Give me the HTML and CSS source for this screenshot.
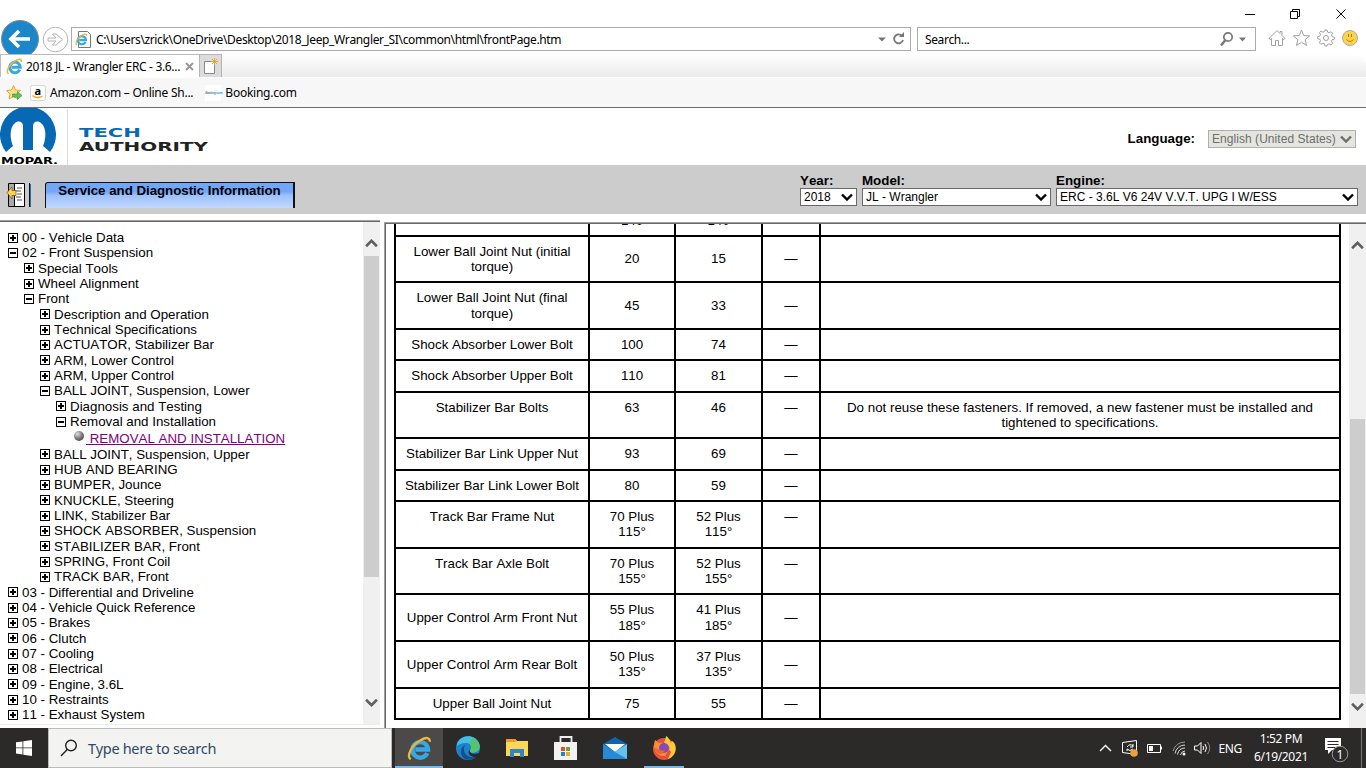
FILE: index.html
```
<!DOCTYPE html>
<html lang="en">
<head>
    <meta charset="UTF-8">
    <title>2018 JL - Wrangler ERC - 3.6L</title>
    <link rel="stylesheet" href="styles.css">
</head>
<body>
    <svg class="defs" width="0" height="0">
        <symbol id="ie" viewBox="0 0 24 24">
            <path d="M19.500 16.500A7.500 7.500 0 1 1 20.200 13H8" fill="none" stroke="#35a9e6" stroke-width="4.200"/>
            <path d="M3.500 22.500C-1 19 5 8 13 4c5-3 9-3 9 1.500" fill="none" stroke="#f2b632" stroke-width="2.200"/>
        </symbol>
        <symbol id="chev" viewBox="0 0 12 8">
            <path d="M1 1.500l5 5 5-5" fill="none" stroke="currentColor" stroke-width="2.400"/>
        </symbol>
    </svg>

    <div class="window-controls">
        <svg width="121" height="27" viewBox="0 0 121 27" fill="none" stroke="#000">
            <path d="M0 14.500h10M45.500 11.500h7v7h-7zM47.500 11v-1.500h7v7H53M91.500 9.500l9 9M100.500 9.500l-9 9"/>
        </svg>
    </div>

    <div class="nav-row">
        <svg class="back" width="40" height="34" viewBox="0 0 40 34">
            <circle cx="20" cy="19" r="18.500" fill="#1b87c9" stroke="#7c8b95"/>
            <path d="M30 19H12M19 11l-8 8 8 8" fill="none" stroke="#fff" stroke-width="3.600"/>
        </svg>
        <svg class="forward" width="27" height="27" viewBox="0 0 27 27" fill="none" stroke="#b3b3b3">
            <circle cx="13.500" cy="12.500" r="12.300"/>
            <path d="M6 11h8l-3.500-4h3.500l6.500 5.500-6.500 5.500h-3.500l3.500-4H6z"/>
        </svg>
        <div class="address">
            <svg width="17" height="17" viewBox="0 0 17 17">
                <path d="M3.500 .5h9l3 3v13h-12z" fill="#fff" stroke="#777"/>
                <use href="#ie" x="0" y="2" width="13" height="13"/>
            </svg>
            <span class="url">C:\Users\zrick\OneDrive\Desktop\2018_Jeep_Wrangler_SI\common\html\frontPage.htm</span>
            <svg class="address-tools" width="30" height="16" viewBox="0 0 30 16">
                <path d="M2 6.500h8L6 10.500z" fill="#777"/>
                <path d="M26 4.800A4.500 4.500 0 1 0 27 9" fill="none" stroke="#777" stroke-width="1.800"/>
                <path d="M23 6h5V1z" fill="#777"/>
            </svg>
        </div>
        <div class="search">
            <span class="search-text">Search...</span>
            <svg width="30" height="16" viewBox="0 0 30 16">
                <path d="M2 14.500l4-5" stroke="#777" stroke-width="2.400"/>
                <circle cx="9" cy="6" r="4.200" fill="none" stroke="#777" stroke-width="1.700"/>
                <path d="M20 6.500h7L23.500 10.500z" fill="#777"/>
            </svg>
        </div>
        <svg class="tools" width="92" height="20" viewBox="0 0 92 20" fill="none" stroke="#a0a0a0">
            <path d="M1 10.500l8-8 3 3v-2h2v4l3 3-1.500 1-1-1v7h-4v-5h-3v5h-4v-7l-1 1z"/>
            <path d="M33.500 2l2.200 5.500 6 .4-4.600 3.800 1.500 5.800-5.100-3.200-5.100 3.200 1.500-5.800-4.600-3.800 6-.4z"/>
            <path d="M57 2h2l.6 2.200 1.500.6 2-1.100 1.500 1.500-1.100 2 .6 1.500 2.200.6v2l-2.200.6-.6 1.500 1.100 2-1.500 1.500-2-1.100-1.500.6L59 18h-2l-.6-2.200-1.500-.6-2 1.100-1.500-1.500 1.100-2-.6-1.500-2.200-.6v-2l2.200-.6.600-1.500-1.100-2 1.500-1.500 2 1.100 1.500-.6z"/>
            <circle cx="58" cy="10" r="2.500"/>
            <circle cx="82" cy="10" r="7.500" fill="#fcd34b" stroke="#aaa"/>
            <path d="M80.500 6v3M83.500 6v3M78.500 11.500q3.500 4 7 0" stroke="#b07a1c"/>
        </svg>
    </div>

    <div class="tab-row">
        <div class="tab">
            <svg width="17" height="17"><use href="#ie"/></svg>
            <span class="tab-title">2018 JL - Wrangler ERC - 3.6...</span>
            <svg width="9" height="9" viewBox="0 0 9 9"><path d="M1 1l7 7M8 1L1 8" stroke="#999" stroke-width="2"/></svg>
        </div>
        <div class="new-tab">
            <svg width="16" height="18" viewBox="0 0 16 18">
                <path d="M1.500 4.500h10v12h-10z" fill="#fff" stroke="#888"/>
                <path d="M11.500 1v7M8 4.500h7M9 2l5 5M14 2L9 7" stroke="#eda63a"/>
            </svg>
        </div>
        <div class="tab-space"></div>
    </div>

    <div class="favorites">
        <svg width="17" height="17" viewBox="0 0 17 17">
            <path d="M7.500 1.500l2 4.500 5 .5-4 3.500 1.500 5-4.500-2.500L3 15l1-5-3.500-3.500 5-.5z" fill="#fde08a" stroke="#e8a33d"/>
            <path d="M6.500 10h5V7.500l4.500 4-4.500 4V13h-5z" fill="#5fc35a" stroke="#3a9d48" stroke-width=".7"/>
        </svg>
        <svg class="amazon" width="16" height="16" viewBox="0 0 16 16">
            <rect x=".5" y=".5" width="15" height="15" rx="2" fill="#fff" stroke="#d5d5d5"/>
            <text x="4.500" y="9.500" class="amazon-a">a</text>
            <path d="M2.500 10.500q5 4 10 .5" fill="none" stroke="#f5a623" stroke-width="1.500"/>
        </svg>
        <span class="fav-name">Amazon.com – Online Sh...</span>
        <span class="booking"><i>Booking</i><b>.com</b></span>
        <span class="fav-name">Booking.com</span>
    </div>

    <div class="brand">
        <svg width="220" height="57" viewBox="0 0 220 57">
            <path d="M6 44A28 28 0 1 1 50 44L43 38C46 31 47 20 41 15c-4-3-8-1-8 3v24H23V18c0-4-4-6-8-3-6 5-5 16-2 23z" fill="#0769b3"/>
            <text x="1" y="56" textLength="57" lengthAdjust="spacingAndGlyphs" class="mopar">MOPAR.</text>
            <path d="M67.500 1v56" stroke="#ddd"/>
            <text x="79" y="28.500" textLength="62" lengthAdjust="spacingAndGlyphs" class="wide blue">TECH</text>
            <text x="79" y="42.500" textLength="129" lengthAdjust="spacingAndGlyphs" class="wide">AUTHORITY</text>
        </svg>
        <div class="language">
            <b>Language:</b>
            <div class="select disabled"><span>English (United States)</span><svg width="12" height="8"><use href="#chev"/></svg></div>
        </div>
    </div>

    <div class="toolbar">
        <svg class="toc" width="25" height="26" viewBox="0 0 25 26">
            <path d="M2.500 1.500h16v23h-16z" fill="#fff" stroke="#000"/>
            <path d="M3 2h5v22H3z" fill="#aaa"/>
            <path d="M8.500 2v22" stroke="#000"/>
            <path d="M11 6h5M10 9h5M11 12h5M10 15h5M11 18h5" stroke="#555"/>
            <path d="M1 10.500L6 5v3.500h4v5H6V17z" fill="#ffd34d" stroke="#6b5310" stroke-width=".7"/>
            <path d="M23.500 1v24" stroke="#111"/><path d="M24.500 2v23" stroke="#2272b5"/>
        </svg>
        <div class="service-tab">Service and Diagnostic Information</div>
        <div class="vehicle">
            <label class="year">Year:<span class="select"><span>2018</span><svg width="12" height="8"><use href="#chev"/></svg></span></label>
            <label class="model">Model:<span class="select"><span>JL - Wrangler</span><svg width="12" height="8"><use href="#chev"/></svg></span></label>
            <label class="engine">Engine:<span class="select"><span>ERC - 3.6L V6 24V V.V.T. UPG I W/ESS</span><svg width="12" height="8"><use href="#chev"/></svg></span></label>
        </div>
    </div>

    <div class="frames">
        <div class="left-frame">
            <ul class="tree">
                <li class="plus">00 - Vehicle Data</li>
                <li class="minus">02 - Front Suspension</li>
                <li class="plus l1">Special Tools</li>
                <li class="plus l1">Wheel Alignment</li>
                <li class="minus l1">Front</li>
                <li class="plus l2">Description and Operation</li>
                <li class="plus l2">Technical Specifications</li>
                <li class="plus l2">ACTUATOR, Stabilizer Bar</li>
                <li class="plus l2">ARM, Lower Control</li>
                <li class="plus l2">ARM, Upper Control</li>
                <li class="minus l2">BALL JOINT, Suspension, Lower</li>
                <li class="plus l3">Diagnosis and Testing</li>
                <li class="minus l3">Removal and Installation</li>
                <li class="leaf"><a href="#">&nbsp;REMOVAL AND INSTALLATION</a></li>
                <li class="plus l2">BALL JOINT, Suspension, Upper</li>
                <li class="plus l2">HUB AND BEARING</li>
                <li class="plus l2">BUMPER, Jounce</li>
                <li class="plus l2">KNUCKLE, Steering</li>
                <li class="plus l2">LINK, Stabilizer Bar</li>
                <li class="plus l2">SHOCK ABSORBER, Suspension</li>
                <li class="plus l2">STABILIZER BAR, Front</li>
                <li class="plus l2">SPRING, Front Coil</li>
                <li class="plus l2">TRACK BAR, Front</li>
                <li class="plus">03 - Differential and Driveline</li>
                <li class="plus">04 - Vehicle Quick Reference</li>
                <li class="plus">05 - Brakes</li>
                <li class="plus">06 - Clutch</li>
                <li class="plus">07 - Cooling</li>
                <li class="plus">08 - Electrical</li>
                <li class="plus">09 - Engine, 3.6L</li>
                <li class="plus">10 - Restraints</li>
                <li class="plus">11 - Exhaust System</li>
            </ul>
            <div class="scrollbar left-bar">
                <svg class="up" width="13" height="9"><use href="#chev"/></svg>
                <div class="thumb"></div>
                <svg width="13" height="9"><use href="#chev"/></svg>
            </div>
        </div>
        <div class="right-frame">
            <div class="content">
                <table>
                    <colgroup><col class="c1"><col class="c2"><col class="c3"><col class="c4"><col class="c5"></colgroup>
                    <tr class="first"><td></td><td>140</td><td>140</td><td></td><td></td></tr>
                    <tr class="two"><td>Lower Ball Joint Nut (initial torque)</td><td>20</td><td>15</td><td>—</td><td></td></tr>
                    <tr class="two"><td>Lower Ball Joint Nut (final torque)</td><td>45</td><td>33</td><td>—</td><td></td></tr>
                    <tr><td>Shock Absorber Lower Bolt</td><td>100</td><td>74</td><td>—</td><td></td></tr>
                    <tr><td>Shock Absorber Upper Bolt</td><td>110</td><td>81</td><td>—</td><td></td></tr>
                    <tr class="two top"><td>Stabilizer Bar Bolts</td><td>63</td><td>46</td><td>—</td><td>Do not reuse these fasteners. If removed, a new fastener must be installed and tightened to specifications.</td></tr>
                    <tr><td>Stabilizer Bar Link Upper Nut</td><td>93</td><td>69</td><td>—</td><td></td></tr>
                    <tr><td>Stabilizer Bar Link Lower Bolt</td><td>80</td><td>59</td><td>—</td><td></td></tr>
                    <tr class="two top"><td>Track Bar Frame Nut</td><td>70 Plus 115°</td><td>52 Plus 115°</td><td>—</td><td></td></tr>
                    <tr class="two top"><td>Track Bar Axle Bolt</td><td>70 Plus 155°</td><td>52 Plus 155°</td><td>—</td><td></td></tr>
                    <tr class="two"><td>Upper Control Arm Front Nut</td><td>55 Plus 185°</td><td>41 Plus 185°</td><td>—</td><td></td></tr>
                    <tr class="two"><td>Upper Control Arm Rear Bolt</td><td>50 Plus 135°</td><td>37 Plus 135°</td><td>—</td><td></td></tr>
                    <tr><td>Upper Ball Joint Nut</td><td>75</td><td>55</td><td>—</td><td></td></tr>
                </table>
            </div>
            <div class="scrollbar right-bar">
                <svg class="up" width="13" height="9"><use href="#chev"/></svg>
                <div class="thumb"></div>
                <svg width="13" height="9"><use href="#chev"/></svg>
            </div>
        </div>
    </div>

    <div class="taskbar">
        <div class="start">
            <svg width="16" height="16" viewBox="0 0 16 16" fill="#fff"><path d="M0 2.300l6.500-.9v6.100H0zM7.300 1.300L16 0v7.500H7.300zM0 8.300h6.500v6.200L0 13.600zM7.300 8.300H16V16l-8.700-1.300z"/></svg>
        </div>
        <div class="task-search">
            <svg width="18" height="18" viewBox="0 0 18 18" fill="none" stroke="#222" stroke-width="1.400"><circle cx="11" cy="6.500" r="5.300"/><path d="M7.200 10.500L1 17"/></svg>
            <span>Type here to search</span>
        </div>
        <div class="apps">
            <div class="app active"><svg width="25" height="25"><use href="#ie"/></svg></div>
            <div class="app">
                <svg width="24" height="24" viewBox="0 0 24 24">
                    <circle cx="12" cy="12" r="12" fill="#1c82cc"/>
                    <path d="M1 8C4-1 18-3 23 7c3 7-3 11-9 9 3-3 2-9-4-9-4 0-7 1-9 3z" fill="#45bde4"/>
                    <path d="M17 1.500c8 4 9 14 0 15-3 0-4-1-3-2 2-3 1-6-1-7z" fill="#54c56a"/>
                    <path d="M9 9c-4 8 4 15 12 11-4 5-12 5-15 0-3-5 0-9 3-11z" fill="#124f8c"/>
                    <path d="M14 13c-2 4 4 6 9 4l1 3-3 1c-6 1-11-4-7-8z" fill="#2b2a29"/>
                </svg>
            </div>
            <div class="app">
                <svg width="22" height="20" viewBox="0 0 22 20">
                    <path d="M0 1h9l2 2h11v15H0z" fill="#fcd658"/><path d="M0 1h9l2 2-2 1H0z" fill="#e79f27"/>
                    <path d="M4 19v-8h14v8h-4v-4H8v4z" fill="#2b86cf"/>
                </svg>
            </div>
            <div class="app">
                <svg width="24" height="24" viewBox="0 0 24 24">
                    <path d="M6.500 7V1h11v6" fill="none" stroke="#eee" stroke-width="1.800"/><path d="M0 6h23v18H0z" fill="#f2f2f2"/>
                    <path d="M7 11h4v4H7z" fill="#e0502c"/><path d="M12 11h4v4h-4z" fill="#6aa52c"/><path d="M7 16h4v4H7z" fill="#2485cf"/><path d="M12 16h4v4h-4z" fill="#efa92b"/>
                </svg>
            </div>
            <div class="app">
                <svg width="24" height="24" viewBox="0 0 24 24">
                    <path d="M0 8l12-7 12 7v15H0z" fill="#0d65ae"/><path d="M2 8h20l-10 8z" fill="#fff"/>
                    <path d="M24 8v15H0z" fill="#62c1ef"/><path d="M0 8l12 8 12 7H0z" fill="#268ad6"/>
                </svg>
            </div>
            <div class="app running">
                <svg width="24" height="24" viewBox="0 0 24 24">
                    <circle cx="12" cy="13" r="11" fill="#e8503c"/>
                    <path d="M14 0c0 4-3 5-1 8l6 8-3 7c9-3 10-15 4-18-1 1-1 2-1 2-1-3-3-6-5-7z" fill="#fbc83b"/>
                    <path d="M3 4l4 3c4-1 9 1 11 5l-5 8C4 20 0 14 3 4z" fill="#f4912f"/>
                    <circle cx="12" cy="12" r="5" fill="#8549b8"/><path d="M2 12c4 0 7 4 11 2-1 5-9 6-11-2z" fill="#ef6534"/>
                </svg>
            </div>
        </div>
        <div class="tray">
            <svg width="112" height="24" viewBox="0 0 112 24" fill="none" stroke="#fff">
                <path d="M1 15l5.500-5.500L12 15" stroke-width="1.400"/>
                <path d="M23.500 6.500l14-2v14l-14-2zM28 11q3-4 6-1M34 8v3h-3M34 13q-3 3-6 0M28 15v-2"/>
                <circle cx="35" cy="17" r="3.800" fill="#e9a23b" stroke="none"/>
                <path d="M48.500 8.500h13v8h-13zM62.500 10.500v3"/><path d="M50 10h4v5h-4z" fill="#fff" stroke="none"/>
                <path d="M76 17.500A10 10 0 0 1 86 9M78.500 18.500a8 8 0 0 1 7.500-6.500M81.500 19a5 5 0 0 1 4.500-4" stroke="#ddd"/>
                <path d="M74 15A12 12 0 0 1 86 6" stroke="#999"/><circle cx="85" cy="18" r="1.500" fill="#fff" stroke="none"/>
                <path d="M95.500 10h3l3.500-3.500v11L98.500 14h-3zM104 10q1.500 2 0 4M106 8q3 4 0 8"/>
                <path d="M108.500 6q4.500 6 0 12" stroke="#888"/>
            </svg>
            <span class="lang">ENG</span>
            <div class="clock"><span>1:52 PM</span><span>6/19/2021</span></div>
            <svg class="notice" width="26" height="26" viewBox="0 0 26 26">
                <path d="M1 1h16v12H8l-4 4v-4H1z" fill="#fff"/><path d="M3.500 4.500h11M3.500 7.500h11M3.500 10.500h8" stroke="#2b2a29"/>
                <circle cx="16" cy="17" r="7.800" fill="#2b2a29" stroke="#999"/><text x="12.500" y="21.500" class="count">1</text>
            </svg>
            <div class="peek"></div>
        </div>
    </div>
</body>
</html>
```
FILE: styles.css
```
*, *::before {
    box-sizing: border-box;
}

body {
    margin: 0;
    width: 1366px;
    height: 768px;
    overflow: hidden;
    background: #fff;
    color: #000;
    font-family: "Liberation Sans", Arial, sans-serif;
    font-size: 13.333px;
    font-kerning: none;
    display: flex;
    flex-direction: column;
}

svg {
    display: block;
    flex: none;
}

.defs {
    position: absolute;
}

/* browser chrome */
.window-controls {
    height: 27px;
    display: flex;
    justify-content: flex-end;
}

.nav-row, .tab-row, .favorites {
    font-family: "Noto Sans", sans-serif;
    font-size: 12px;
    letter-spacing: -0.25px;
    white-space: nowrap;
}

.nav-row {
    height: 27px;
    display: flex;
    align-items: flex-start;
}

.back {
    margin-top: -7px;
}

.forward {
    margin: 0 2px 0 2px;
}

.address, .search {
    height: 24px;
    border: 1px solid #ababab;
    display: flex;
    align-items: center;
}

.address {
    width: 840px;
    padding: 0 4px 0 3px;
}

.url {
    margin-left: 4px;
    letter-spacing: -0.36px;
}

.address-tools {
    margin-left: auto;
}

.search {
    width: 339px;
    margin-left: 6px;
    padding: 0 6px 0 7px;
    justify-content: space-between;
}

.search-text {
    letter-spacing: -0.4px;
}

.tools {
    margin: 1px 0 0 12px;
}

.tab-row {
    height: 23px;
    display: flex;
}

.tab {
    width: 199px;
    border-top: 1px solid #bbb;
    border-left: 1px solid #bbb;
    padding: 0 5px 0 5px;
    display: flex;
    align-items: center;
    background: #fff;
}

.tab-title {
    margin: 0 auto 0 3px;
    letter-spacing: -0.33px;
}

.new-tab {
    width: 23px;
    border: 1px solid #b5b5b5;
    border-bottom: 0;
    background: #dcdcdc;
    padding: 2px 0 0 3px;
}

.tab-space {
    flex: 1;
    background: linear-gradient(#fff, #ebebeb);
    border-radius: 0 12px 0 0;
}

.favorites {
    height: 31px;
    border-top: 1px solid #fff;
    border-bottom: 1px solid #6b6b6b;
    background: #f7f7f7;
    display: flex;
    align-items: center;
    padding-left: 6px;
}

.amazon {
    margin: 0 4px 0 7px;
}

.amazon-a {
    font: bold 11px "Noto Sans", sans-serif;
}

.booking {
    width: 16px;
    height: 16px;
    margin: 0 4px 0 12px;
    background: #fff;
    display: flex;
    align-items: center;
    font-size: 3px;
    letter-spacing: -0.1px;
    color: #14366f;
}

.booking b {
    color: #2a9be0;
}

/* page header */
.brand {
    height: 57px;
    display: flex;
    justify-content: space-between;
}

.mopar {
    font: bold 9px "DejaVu Sans", sans-serif;
}

.wide {
    font: bold 13px "DejaVu Sans", sans-serif;
    fill: #222;
}

.blue {
    fill: #0769b3;
}

.language {
    display: flex;
    align-items: center;
    gap: 13px;
    padding: 5px 10px 0 0;
}

.language b {
    padding-bottom: 1px;
}

.select {
    height: 18px;
    border: 1px solid #696969;
    background: #fff;
    padding: 0 3px 0 3px;
    display: flex;
    align-items: center;
    justify-content: space-between;
    font-size: 12px;
    font-weight: normal;
    white-space: nowrap;
}

.disabled {
    width: 148px;
    background: #e5e5df;
    border-color: #b0b0b0;
    color: #6d6d6d;
    letter-spacing: 0.05px;
}

.toolbar {
    height: 49px;
    background: #ccc;
    display: flex;
    padding: 0 8px 0 6px;
}

.toc {
    margin-top: 17px;
}

.service-tab {
    width: 250px;
    height: 26px;
    margin: 17px 0 0 14px;
    border: 1px solid #111;
    border-width: 1px 2px 0 1px;
    border-radius: 3px 0 0 0;
    background: linear-gradient(#72a7f7 35%, #9dc1fc 50%, #c2d8ff);
    text-align: center;
    font-weight: bold;
    letter-spacing: -0.04px;
    line-height: 16px;
}

.vehicle {
    margin-left: auto;
    padding-top: 8px;
    display: flex;
    gap: 5px;
    font-weight: bold;
    line-height: 15px;
}

.year { width: 57px; }
.model { width: 189px; }
.engine { width: 302px; }

/* frames */
.frames {
    height: 514px;
    display: flex;
}

.left-frame {
    width: 380px;
    height: 505px;
    margin-top: 6px;
    border-top: 1px solid #a0a0a0;
    border-bottom: 1px solid #eee;
    box-shadow: inset 0 1px #696969;
    display: flex;
    justify-content: space-between;
}

.tree {
    list-style: none;
    margin: 0;
    padding: 9px 0 0 8px;
    line-height: 15.333px;
    white-space: nowrap;
}

.tree li {
    height: 15.333px;
    display: flex;
    align-items: center;
    gap: 4px;
}

.tree li::before {
    content: "";
    width: 10px;
    height: 10px;
    border: 1px solid #000;
    background: linear-gradient(#000, #000) center / 6px 2px no-repeat;
}

.tree .plus::before {
    background: linear-gradient(#000, #000) center / 6px 2px no-repeat, linear-gradient(#000, #000) center / 2px 6px no-repeat;
}

.tree .l1 { padding-left: 16px; }
.tree .l2 { padding-left: 32px; }
.tree .l3 { padding-left: 48px; }

.tree .leaf {
    height: 17.333px;
    padding: 1px 0 0 66px;
    gap: 2px;
}

.tree .leaf::before {
    border: 0;
    border-radius: 50%;
    margin-bottom: 4px;
    background: radial-gradient(circle at 35% 30%, #ddd, #777 50%, #333);
}

.leaf a {
    color: #800080;
}

.scrollbar {
    width: 17px;
    background: #f0f0f0;
    color: #606060;
    display: flex;
    flex-direction: column;
    align-items: center;
}

.scrollbar .up {
    transform: rotate(180deg);
}

.thumb {
    width: 15px;
    background: #cdcdcd;
}

.left-bar {
    margin-top: 1px;
    padding-top: 17px;
}

.left-bar .thumb {
    height: 321px;
    margin: 8px 0 121px;
}

.right-frame {
    width: 982px;
    margin: 8px 0 0 4px;
    border-top: 1px solid #a0a0a0;
    border-left: 1px solid #a0a0a0;
    box-shadow: inset 1px 1px #696969;
    padding: 1px 0 0 1px;
    display: flex;
    justify-content: space-between;
}

.content {
    padding-left: 8px;
    overflow: hidden;
}

.right-bar {
    padding-top: 17px;
}

.right-bar .thumb {
    height: 275px;
    margin: 169px 0 8px;
}

/* scrolled part way down, so the first row is mostly out of view */
table {
    width: 947px;
    margin-top: -20.6px;
    border-collapse: collapse;
    table-layout: fixed;
}

.c1 { width: 194px; }
.c2 { width: 86px; }
.c3 { width: 87px; }
.c4 { width: 58px; }
.c5 { width: 520px; }

tr {
    height: 31.333px;
}

.two {
    height: 46.667px;
}

td {
    border: 2px solid #000;
    padding: 0 16px;
    text-align: center;
    line-height: 15.333px;
}

td:first-child {
    padding: 0 6px;
}

.first td {
    padding-top: 1px;
}

.top td {
    vertical-align: top;
    padding-top: 7px;
}

/* windows taskbar */
.taskbar {
    height: 40px;
    background: #2b2a29;
    display: flex;
    color: #fff;
    font-family: "Noto Sans", sans-serif;
}

.start {
    width: 48px;
    display: flex;
    align-items: center;
    justify-content: center;
}

.task-search {
    width: 344px;
    border: 1px solid #bbb;
    background: #f3f3f1;
    color: #2f4a63;
    display: flex;
    align-items: center;
    padding-left: 11px;
    gap: 10px;
    font-size: 14.500px;
    letter-spacing: -0.33px;
}

.apps {
    display: flex;
    margin-left: 3px;
    gap: 1px;
}

.app {
    width: 48px;
    display: flex;
    align-items: center;
    justify-content: center;
}

.active {
    background: #4b4a49;
    border-bottom: 2px solid #76b9ed;
    padding-top: 2px;
}

.running {
    background: linear-gradient(#76b9ed, #76b9ed) center bottom / 40px 2px no-repeat;
}

.tray {
    margin-left: auto;
    display: flex;
    align-items: center;
    font-size: 12px;
    letter-spacing: -0.35px;
}

.lang {
    margin-left: 8px;
}

.clock {
    width: 76px;
    margin-left: 1px;
    display: flex;
    flex-direction: column;
    align-items: center;
    line-height: 18px;
}

.notice {
    margin: 4px 11px 0 5px;
}

.count {
    font: 12px "Noto Sans", sans-serif;
    fill: #fff;
}

.peek {
    width: 5px;
    height: 40px;
    border-left: 1px solid #777;
}
```
